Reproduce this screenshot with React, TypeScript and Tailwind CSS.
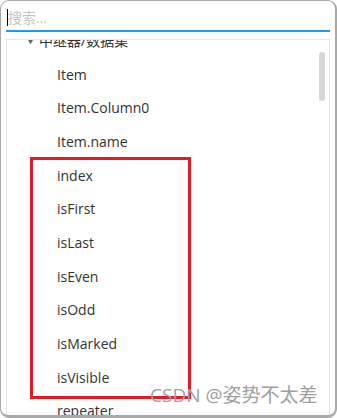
import React from 'react';

const rows = ['Item', 'Item.Column0', 'Item.name', 'index', 'isFirst', 'isLast', 'isEven', 'isOdd', 'isMarked', 'isVisible', 'repeater'];

export default function App() {
  return (
    <div className="w-[337px] h-[418px] bg-white overflow-hidden" style={{ fontFamily: '"Open Sans", "Noto Sans CJK SC", sans-serif' }}>
      <div className="relative w-full h-full bg-white border border-[#a8a8a8] border-r-2 border-b-[3px] rounded-[9px] px-[5px] pt-[4px] flex flex-col">
        {/* search box */}
        <div className="h-[27px] border-b-2 border-[#1a9cf0] flex items-center pl-[1px]">
          <div className="w-px h-[17px] bg-black" />
          <span className="text-[14px] text-[#c4c4c4] leading-none">搜索...</span>
        </div>

        {/* tree list */}
        <div className="relative mt-[7px] flex-1 border border-[#e6e6e6] border-b-0 overflow-hidden">
          <div className="-mt-[16.5px]">
            <div className="h-[33.7px] flex items-center pl-[19px] gap-[4px] text-[14px] text-[#333]">
              <span className="text-[9px] text-[#666]">▼</span>
              <span>中继器/数据集</span>
            </div>
            {rows.map(r => (
              <div key={r} className="h-[33.7px] flex items-center pl-[50px] text-[14px] text-[#333]">
                {r}
              </div>
            ))}
          </div>

          {/* scrollbar thumb */}
          <div className="absolute right-[4px] top-[12px] w-[6px] h-[49px] rounded-full bg-[#d6d6d6]" />
        </div>

        {/* annotation box */}
        <div className="absolute left-[29px] top-[156px] w-[161px] h-[242px] border-[3px] border-[#e8191f]" />

        {/* watermark */}
        <div className="absolute left-[149px] top-[385px] text-[19px] text-[#a0a0a0] leading-none">
          CSDN @姿势不太差
        </div>
      </div>
    </div>
  );
}
